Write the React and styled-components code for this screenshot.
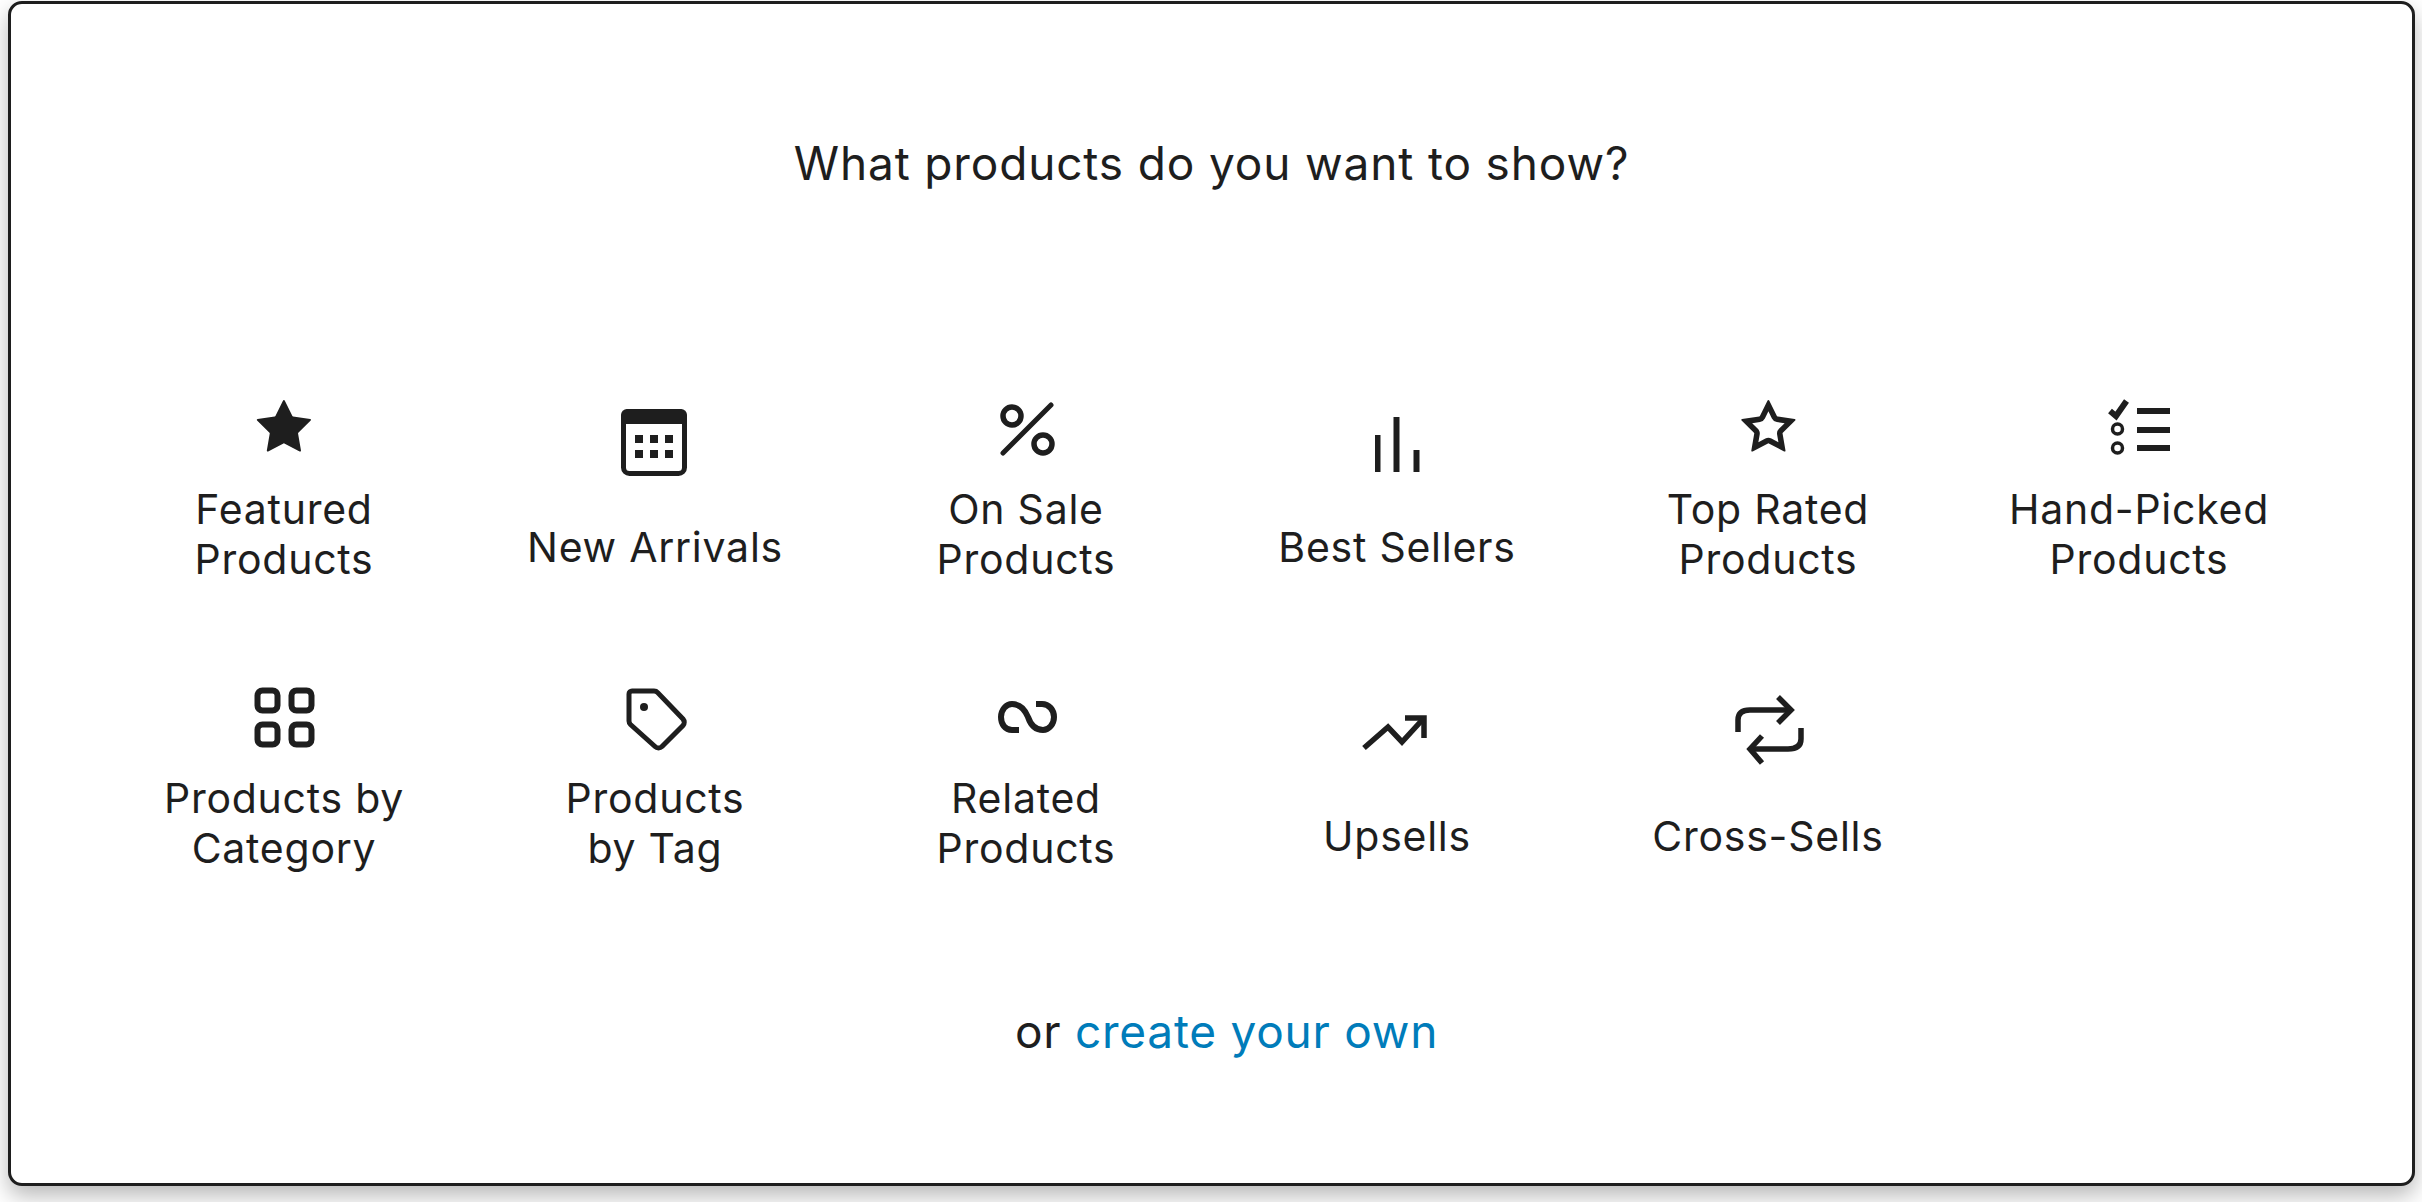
import React from "react";
import styled, { createGlobalStyle } from "styled-components";

const Global = createGlobalStyle`
  html, body { margin: 0; padding: 0; background: #fff; }
  body { width: 2422px; height: 1202px; overflow: hidden; font-family: Inter, "Noto Sans", sans-serif; color: #1e1e1e; }
`;

const Panel = styled.main`
  box-sizing: border-box;
  width: 2407px;
  height: 1185px;
  margin: 1px 0 0 8px;
  border: 3px solid #1e1e1e;
  border-radius: 14px;
  background: #fff;
  box-shadow: 0 10px 22px rgba(0, 0, 0, 0.28);
  display: flex;
  flex-direction: column;
  align-items: center;
`;

const Heading = styled.h2`
  margin: 129px 0 0;
  font-size: 46px;
  line-height: 60px;
  font-weight: 400;
  letter-spacing: 0.85px;
`;

const Grid = styled.div`
  width: 2226px;
  margin-top: 182px;
  display: grid;
  grid-template-columns: repeat(6, 371px);
  grid-auto-rows: 289px;
`;

const Item = styled.div`
  height: 209px;
  display: flex;
  flex-direction: column;
  align-items: center;
  justify-content: flex-end;
  gap: ${(p) => (p.$single ? "22px" : "0")};
`;

const IconBox = styled.svg`
  width: 100px;
  height: 100px;
  flex: none;
  fill: #1e1e1e;
`;

const Label = styled.span`
  font-size: 41px;
  line-height: 50px;
  letter-spacing: 0.75px;
  text-align: center;
  white-space: pre-line;
  padding-bottom: ${(p) => (p.$single ? "12px" : "0")};
`;

const Footer = styled.p`
  margin: 48px 0 0 30px;
  font-size: 46px;
  line-height: 60px;
  letter-spacing: 0.75px;
`;

const Link = styled.a`
  color: #007cba;
  text-decoration: none;
`;

const Line = (p) => <path fill="none" stroke="#1e1e1e" strokeWidth="5" {...p} />;

const STAR = "M11.776 4.454a.25.25 0 01.448 0l2.069 4.192a.25.25 0 00.188.137l4.626.672a.25.25 0 01.139.426l-3.348 3.263a.25.25 0 00-.072.222l.79 4.607a.25.25 0 01-.362.263l-4.138-2.175a.25.25 0 00-.232 0l-4.138 2.175a.25.25 0 01-.363-.263l.79-4.607a.25.25 0 00-.071-.222L4.754 9.881a.25.25 0 01.139-.426l4.626-.672a.25.25 0 00.188-.137l2.069-4.192z";
const STAR_EMPTY = "M9.706 8.646a.25.25 0 01-.188.137l-4.626.672a.25.25 0 00-.139.427l3.348 3.262a.25.25 0 01.072.222l-.79 4.607a.25.25 0 00.362.264l4.138-2.176a.25.25 0 01.233 0l4.137 2.175a.25.25 0 00.363-.263l-.79-4.607a.25.25 0 01.072-.222l3.347-3.262a.25.25 0 00-.139-.427l-4.626-.672a.25.25 0 01-.188-.137l-2.069-4.192a.25.25 0 00-.448 0L9.706 8.646zM12 7.39l-.948 1.921a1.75 1.75 0 01-1.317.957l-2.12.308 1.534 1.495c.412.402.6.982.503 1.55l-.362 2.11 1.896-.997a1.75 1.75 0 011.629 0l1.895.997-.362-2.11a1.75 1.75 0 01.504-1.55l1.533-1.495-2.12-.308a1.75 1.75 0 01-1.317-.957L12 7.39z";

const icons = {
  star: <g transform="translate(5.5 0) scale(3.7)"><path d={STAR} /></g>,
  calendar: (
    <g transform="translate(-2 0)">
      <rect x="20.5" y="11.5" width="61" height="62" rx="6" fill="none" stroke="#1e1e1e" strokeWidth="5" />
      <path d="M18 24V15a6 6 0 0 1 6-6h54a6 6 0 0 1 6 6v9z" />
      {[32, 47, 62].map((x) => [35, 50].map((y) => <rect key={`${x}-${y}`} x={x} y={y} width="8" height="8" />))}
    </g>
  ),
  percent: (
    <>
      <circle cx="36" cy="32" r="9" fill="none" stroke="#1e1e1e" strokeWidth="5.5" />
      <circle cx="67" cy="60" r="9" fill="none" stroke="#1e1e1e" strokeWidth="5.5" />
      <Line d="M27 69L75 21" strokeLinecap="round" strokeWidth="5" />
    </>
  ),
  bars: (
    <g transform="translate(-1.5 0)">
      <rect x="29.5" y="35" width="5.5" height="37" />
      <rect x="48" y="17" width="6" height="55" />
      <rect x="68" y="50" width="6" height="22" />
    </g>
  ),
  starEmpty: <g transform="translate(6 0) scale(3.7)"><path fillRule="evenodd" d={STAR_EMPTY} /></g>,
  checklist: (
    <>
      <Line d="M21 27L27 32L37.5 17" strokeWidth="6" />
      <circle cx="28.5" cy="45" r="5" fill="none" stroke="#1e1e1e" strokeWidth="3.5" />
      <circle cx="28.5" cy="64" r="5" fill="none" stroke="#1e1e1e" strokeWidth="3.5" />
      <rect x="48" y="24" width="33" height="6" />
      <rect x="48" y="43" width="33" height="6" />
      <rect x="48" y="61" width="33" height="6" />
    </>
  ),
  grid: (
    <>
      {[23.5, 57.5].map((x) => [17.5, 51.5].map((y) => (
        <rect key={`${x}-${y}`} x={x} y={y} width="20" height="20" rx="5" fill="none" stroke="#1e1e1e" strokeWidth="6" />
      )))}
    </>
  ),
  tag: (
    <g transform="translate(-1 0)">
      <Line d="M25 48V21a3 3 0 0 1 3-3H50a5 5 0 0 1 3.7 1.6L79 46a5 5 0 0 1 0 6.6L58 73.5a5 5 0 0 1-7 0L26.5 51.5a5 5 0 0 1-1.5-3.5z" />
      <circle cx="40" cy="34" r="4" />
    </g>
  ),
  infinity: <Line d="M43 57H36C29 57 25 51 25 44C25 37 30 31 36 31C46 31 50 39 52 44C54 50 58 57 67 57C73 57 78 51 78 44C78 37 73 31 66 31H60" strokeWidth="6" />,
  trend: (
    <g transform="translate(-3 0)">
      <Line d="M20 59L44 38L58 53L80 29" strokeWidth="5.5" />
      <Line d="M61 29H80V49" strokeWidth="5.5" />
    </g>
  ),
  repeat: (
    <>
      <Line d="M20 43V31Q20 21 32 21H73" strokeWidth="5.5" />
      <Line d="M60 8L73 21L60 34" strokeWidth="5.5" />
      <Line d="M83 39V50Q83 60 70 60H32" strokeWidth="5.5" />
      <Line d="M44 47L32 60L44 74" strokeWidth="5.5" />
    </>
  ),
};

const items = [
  ["star", "Featured\nProducts"],
  ["calendar", "New Arrivals", true],
  ["percent", "On Sale\nProducts"],
  ["bars", "Best Sellers", true],
  ["starEmpty", "Top Rated\nProducts"],
  ["checklist", "Hand-Picked\nProducts"],
  ["grid", "Products by\nCategory"],
  ["tag", "Products\nby Tag"],
  ["infinity", "Related\nProducts"],
  ["trend", "Upsells", true],
  ["repeat", "Cross-Sells", true],
];

export default function App() {
  return (
    <>
      <Global />
      <Panel>
        <Heading>What products do you want to show?</Heading>
        <Grid>
          {items.map(([icon, label, single]) => (
            <Item key={icon} $single={single}>
              <IconBox viewBox="0 0 100 100">{icons[icon]}</IconBox>
              <Label $single={single}>{label}</Label>
            </Item>
          ))}
        </Grid>
        <Footer>
          or <Link href="#">create your own</Link>
        </Footer>
      </Panel>
    </>
  );
}
